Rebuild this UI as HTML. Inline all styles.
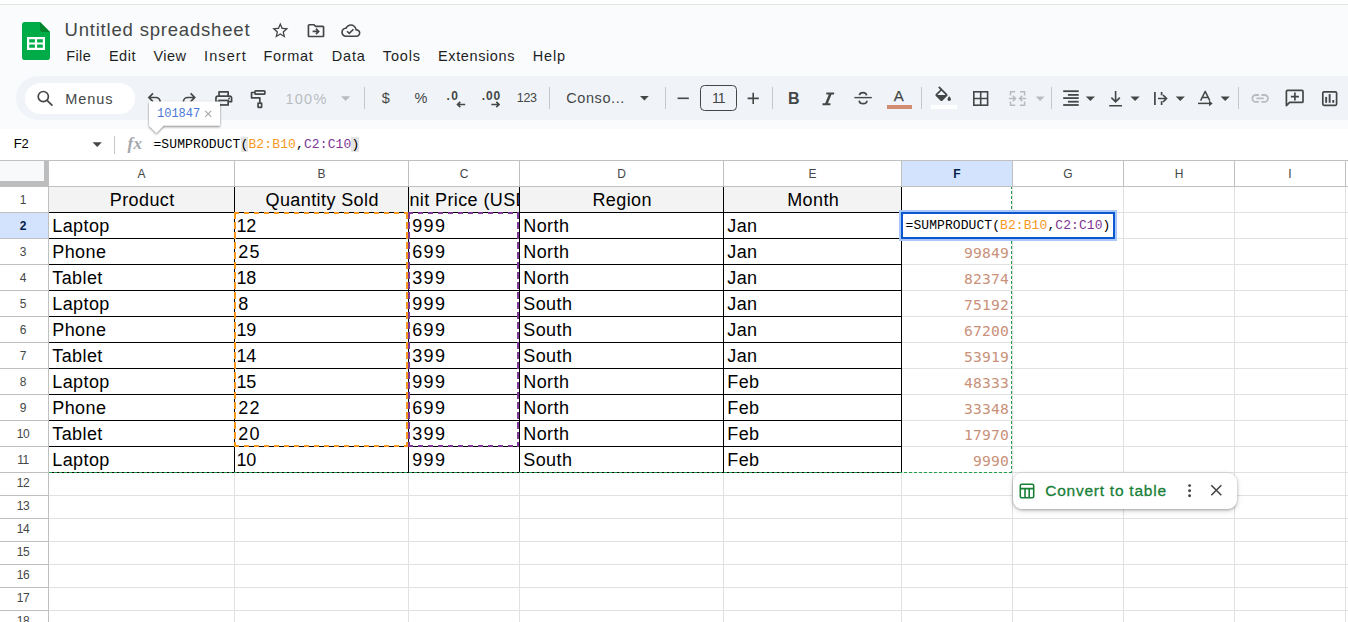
<!DOCTYPE html>
<html lang="en">
<head>
<meta charset="utf-8">
<title>Untitled spreadsheet</title>
<style>
*{box-sizing:border-box;margin:0;padding:0}
html,body{width:1348px;height:622px;overflow:hidden;background:#fff}
body{position:relative;font-family:"Liberation Sans",sans-serif;color:#1f1f1f}
.abs{position:absolute}
#topwhite{left:0;top:0;width:1348px;height:4px;background:#fff}
#topline{left:0;top:4px;width:1348px;height:1px;background:#e1e3e1}
#chrome{left:0;top:5px;width:1348px;height:124px;background:#f9fbfd}
#toolbar{left:16px;top:76px;width:1400px;height:44px;border-radius:22px;background:#f0f4f9}
#search{left:25px;top:83px;width:110px;height:31px;border-radius:16px;background:#fff}
.tt{position:absolute;line-height:20px;white-space:pre}
#fbar{left:0;top:129px;width:1348px;height:31px;background:#fff}
#fline{left:0;top:160px;width:1348px;height:1px;background:#c0c0c0}
#ftext{left:153.4px;top:136px;letter-spacing:.12px;font-family:"Liberation Mono",monospace;font-size:13px;line-height:17px;color:#000;white-space:pre}
.par{background:#e3e3e3}
.or{color:#f7981d}.pu{color:#7e3794}
/* grid */
#grid{position:absolute;left:0;top:161px;width:1348px;height:461px;background:#fff;overflow:hidden}
#gridin>*{position:absolute}
#gridin{position:absolute;left:0;top:-161px}
.ch{top:161px;height:25px;line-height:26px;text-align:center;font-size:12px;overflow:hidden;color:#444746;background:#fff}
.ch.sel{background:#d3e3fd;color:#041e49;font-weight:bold}
.rh{left:0;width:48px;text-align:center;font-size:12px;letter-spacing:-.4px;overflow:hidden;color:#444746;background:#fff;padding-right:2px}
.rh.sel{background:#d3e3fd;color:#041e49;font-weight:bold}
.vl{top:161px;width:1px;height:461px;background:#e1e1e1}
.hl{left:0;width:1348px;height:1px;background:#e1e1e1}
.chl{top:161px;width:1px;height:25px;background:#c0c0c0}
.rhl{left:0;width:48px;height:1px;background:#c0c0c0}
.hb1{left:48px;top:161px;width:1px;height:461px;background:#c0c0c0}
.hb2{left:0;top:186px;width:1348px;height:1px;background:#c0c0c0}
.hdrfill{left:49px;top:187px;width:852px;height:25px;background:#f3f3f3}
.cell{overflow:hidden;white-space:nowrap;font-size:18px;letter-spacing:.4px;color:#000;display:flex;align-items:flex-end;padding:0 4px 0 3.3px}
.cell span{display:block;line-height:20px;margin-bottom:2px}
.cell.hd{justify-content:center;padding:0 3px 0 4.4px}
.cell.num{justify-content:flex-end;padding-right:3px;letter-spacing:.2px;font-family:"DejaVu Sans Mono","Liberation Mono",monospace;font-size:14.67px;color:#c9917a}
.cell.dg{letter-spacing:1.3px}
.cell.dg i{font-style:normal;margin-left:-1.7px;letter-spacing:-.45px}
.cell.num span{margin-bottom:1.3px}
.cell.clipc span{position:relative;left:1px}
.bh{left:49px;width:853px;height:1px;background:#000}
.bv{top:187px;width:1px;height:286px;background:#000}

#editor{left:901px;top:212px;width:214px;height:27px;border:2px solid #0b57d0;background:#fff;box-shadow:0 0 0 2px #a8c7fa;font-family:"Liberation Mono",monospace;font-size:13px;letter-spacing:.08px;line-height:23px;color:#000;white-space:pre;padding-left:2.5px}
#chip{left:1013px;top:473px;width:224px;height:36px;border-radius:9px;background:#fff;box-shadow:0 1px 3px rgba(0,0,0,.3),0 2px 6px rgba(0,0,0,.12)}
#corner{left:0;top:161px;width:44px;height:20px;background:#f8f9fa}
#cornerv{left:44px;top:161px;width:4px;height:25px;background:#bdbdbd}
#cornerh{left:0;top:181px;width:48px;height:5px;background:#bdbdbd}
</style>
</head>
<body>
<div class="abs" id="topwhite"></div>
<div class="abs" id="topline"></div>
<div class="abs" id="chrome"></div>
<svg class="abs" style="left:22px;top:22px" width="28" height="38" viewBox="0 0 28 38">
<path d="M2.6 0H18l10 10v25.4c0 1.45-1.15 2.6-2.6 2.6H2.6C1.15 38 0 36.85 0 35.4V2.6C0 1.15 1.15 0 2.6 0z" fill="#00ac47"/>
<path d="M18 0l10 10H20.6C19.15 10 18 8.85 18 7.4z" fill="#00832d"/>
<path d="M5 15h18v13H5z" fill="#fff"/>
<path d="M7.2 17.2h5.7v3.2H7.2zM15.1 17.2h5.7v3.2h-5.7zM7.2 22.6h5.7v3.2H7.2zM15.1 22.6h5.7v3.2h-5.7z" fill="#00ac47"/>
</svg>
<svg class="abs" style="left:0;top:0" width="1348" height="70" viewBox="0 0 1348 70"><g transform="translate(270.61,20.86) scale(0.8076)" fill="#444746" ><path d="M22 9.24l-7.19-.62L12 2 9.19 8.63 2 9.24l5.46 4.73L5.82 21 12 17.27 18.18 21l-1.63-7.03L22 9.24zM12 15.4l-3.76 2.27 1-4.28-3.32-2.88 4.38-.38L12 6.1l1.71 4.04 4.38.38-3.32 2.88 1 4.28L12 15.4z"/></g><g transform="translate(305.92,20.52) scale(0.8400)" fill="#444746" ><path d="M20 6h-8l-2-2H4c-1.1 0-2 .9-2 2v12c0 1.1.9 2 2 2h16c1.1 0 2-.9 2-2V8c0-1.1-.9-2-2-2zm0 12H4V6h5.17l2 2H20v10zM12.6 17l-1.41-1.41L12.77 14H8v-2h4.77l-1.58-1.59L12.6 9l4 4-4 4z"/></g><g transform="translate(341.23,20.97) scale(0.8021)" fill="#444746" ><path d="M19.35 10.04C18.67 6.59 15.64 4 12 4 9.11 4 6.6 5.64 5.35 8.04 2.34 8.36 0 10.91 0 14c0 3.31 2.69 6 6 6h13c2.76 0 5-2.24 5-5 0-2.64-2.05-4.78-4.65-4.96zM19 18H6c-2.21 0-4-1.79-4-4 0-2.05 1.53-3.76 3.56-3.97l1.07-.11.5-.95C8.08 7.14 9.94 6 12 6c2.62 0 4.88 1.86 5.39 4.43l.3 1.5 1.53.11c1.56.1 2.78 1.41 2.78 2.96 0 1.65-1.35 3-3 3zm-9-3.82l-2.09-2.09L6.5 13.5 10 17l6.01-6.01-1.41-1.41L10 14.18z"/></g></svg>
<div class="abs" id="toolbar"></div>
<div class="abs" id="search"></div>
<svg class="abs" style="left:0;top:70px" width="1348" height="60" viewBox="0 70 1348 60">
<g fill="none" stroke="#444746" stroke-width="1.7"><circle cx="43.3" cy="96.6" r="5.1"/><path d="M47.1 100.4L52.4 105.6" stroke-linecap="butt"/></g>
<g fill="none" stroke="#444746" stroke-width="1.7" stroke-linejoin="miter"><path d="M153 93.4L148.9 97.5L153 101.6M149.3 97.5H156a4.2 4.2 0 0 1 4.2 4.2V106"/><path d="M190.6 93.4L194.7 97.5L190.6 101.6M194.3 97.5H187.6a4.2 4.2 0 0 0-4.2 4.2V106"/></g>
<g fill="none" stroke="#444746" stroke-width="1.7" stroke-linejoin="round"><path d="M219.05 96V91.85H228.15V96"/><path d="M219 101.55H215.95V98.2a2.1 2.1 0 0 1 2.1-2.1H229.5a2.1 2.1 0 0 1 2.1 2.1V101.55H228.2"/><rect x="219.05" y="100.45" width="9.1" height="4.5" stroke-linejoin="miter"/></g><circle cx="229.1" cy="98.5" r=".95" fill="#444746"/>
<g fill="none" stroke="#444746" stroke-width="1.7" stroke-linejoin="round"><rect x="254.95" y="90.85" width="9.9" height="3.25" rx="0.7"/><path d="M254.9 92.5H251.55V97.85H259.85V102.4"/><rect x="258.05" y="103.05" width="3.55" height="4.25" rx="0.4"/></g>
<path d="M341 96.2H350.2L345.6 100.9z" fill="#b9bcbf"/>
<path d="M640 96.0H648.8L644.4 100.5z" fill="#444746"/>
<path d="M1035.6 96.4H1044.6L1040.1 100.9z" fill="#b9bcbf"/>
<path d="M1085.8 96.4H1095L1090.4 100.9z" fill="#444746"/>
<path d="M1130.5 96.4H1139.7L1135.1 100.9z" fill="#444746"/>
<path d="M1175.7 96.4H1184.9L1180.3000000000002 100.9z" fill="#444746"/>
<path d="M1220.6 96.4H1229.8L1225.1999999999998 100.9z" fill="#444746"/>
<rect x="364" y="87" width="1" height="22" fill="#c7c7c7"/>
<rect x="549" y="87" width="1" height="22" fill="#c7c7c7"/>
<rect x="665" y="87" width="1" height="22" fill="#c7c7c7"/>
<rect x="772" y="87" width="1" height="22" fill="#c7c7c7"/>
<rect x="921" y="87" width="1" height="22" fill="#c7c7c7"/>
<rect x="1051" y="87" width="1" height="22" fill="#c7c7c7"/>
<rect x="1238" y="87" width="1" height="22" fill="#c7c7c7"/>
<g fill="none" stroke="#444746" stroke-width="1.6"><path d="M465.2 104.5H457.6M460.3 101.8L457.5 104.5L460.3 107.2"/><path d="M491.3 104.5H499M496.3 101.8L499.1 104.5L496.3 107.2"/></g>
<rect x="677.6" y="97.5" width="11.2" height="1.6" fill="#444746"/>
<path d="M747.6 97.6h11.2v1.6h-11.2zM752.4 92.8h1.6v11.2h-1.6z" fill="#444746"/>
<rect x="700.5" y="85.5" width="36" height="25" rx="4" fill="none" stroke="#444746" stroke-width="1"/>
<path d="M826.3 92.4h7.8v2h-2.6l-3.6 8.9h2.5v2h-7.9v-2h2.7l3.6-8.9h-2.5z" fill="#444746"/>
<g fill="none" stroke="#444746" stroke-width="1.7"><path d="M854.4 97.6H871.8" stroke-width="1.4"/><path d="M866.6 95.4c-.2-1.7-1.6-2.8-3.6-2.8-2 0-3.4 1-3.6 2.6"/><path d="M859.2 100.6c.2 1.9 1.7 3.1 4 3.1 2.2 0 3.7-1.1 3.8-2.9"/></g>
<rect x="887" y="105" width="25" height="4" fill="#d28c72"/>
<rect x="931" y="105" width="26" height="4" fill="#ffffff"/>
<g transform="translate(932.84,86.36) scale(0.8634)" fill="#444746" ><path d="M16.56 8.94L7.62 0 6.21 1.41l2.38 2.38-5.15 5.15c-.59.59-.59 1.54 0 2.12l5.5 5.5c.29.29.68.44 1.06.44s.77-.15 1.06-.44l5.5-5.5c.59-.58.59-1.53 0-2.12zM5.21 10L10 5.21 14.79 10H5.21zM19 11.5s-2 2.17-2 3.5c0 1.1.9 2 2 2s2-.9 2-2c0-1.33-2-3.5-2-3.5z"/></g>
<g fill="none" stroke="#444746" stroke-width="1.6"><rect x="973.8" y="91.8" width="13.8" height="13.4"/><path d="M980.7 91.8V105.2M973.8 98.5H987.6"/></g>
<g fill="none" stroke="#b9bcbf" stroke-width="1.5"><path d="M1015.2 91.7H1010.5V95.4M1020 91.7H1024.6V95.4M1015.2 105.3H1010.5V101.6M1020 105.3H1024.6V101.6"/><path d="M1008.9 98.5H1015.4M1012.9 95.9L1015.6 98.5L1012.9 101.1M1026.2 98.5H1019.7M1022.2 95.9L1019.5 98.5L1022.2 101.1"/></g>
<g fill="#444746"><rect x="1063.2" y="90.3" width="15.5" height="1.8"/><rect x="1067.9" y="94" width="10.8" height="1.8"/><rect x="1063.2" y="97.2" width="15.5" height="1.8"/><rect x="1067.9" y="100.8" width="10.8" height="1.8"/><rect x="1063.2" y="104.1" width="15.5" height="1.8"/></g>
<g fill="none" stroke="#444746" stroke-width="1.6"><path d="M1109.2 105.8H1122M1115.6 91V101.6M1111.4 97.6L1115.6 101.8L1119.8 97.6"/></g>
<g fill="none" stroke="#444746" stroke-width="1.7"><path d="M1154.9 92.1V105M1161.6 92.1V95.3M1161.6 101.3V105M1158 98.5H1166.2M1163 95L1166.5 98.5L1163 102"/></g>
<g fill="none" stroke="#444746" stroke-width="1.5" stroke-linejoin="round"><path d="M1200.6 100.7L1205.2 91.4L1209.8 100.7M1202.2 97.6H1208.2"/><path d="M1198 103.4H1210.5"/></g><path d="M1209 100.6L1212.7 103.4L1209 106.2z" fill="#444746"/>
<g fill="none" stroke="#b9bcbf" stroke-width="1.8"><path d="M1258.9 95H1255.8a3.45 3.45 0 0 0 0 6.9h3.1M1261.4 95h3.1a3.45 3.45 0 0 1 0 6.9h-3.1M1256.5 98.45H1263.8"/></g>
<g fill="none" stroke="#444746" stroke-width="1.7" stroke-linejoin="round"><path d="M1286.4 105.6V91.4a1 1 0 0 1 1-1H1302a1 1 0 0 1 1 1V101.4a1 1 0 0 1-1 1H1289.6z"/><path d="M1294.9 92.6V100.6M1290.9 96.6H1298.9" stroke-width="1.7"/></g>
<g fill="none" stroke="#444746" stroke-width="1.7"><rect x="1322.8" y="91.9" width="13.8" height="13.4" rx="1.2"/></g><g fill="#444746"><rect x="1325.2" y="96.9" width="1.9" height="5.9"/><rect x="1328.7" y="94.1" width="1.9" height="8.7"/><rect x="1332.3" y="100" width="1.9" height="2.8"/></g>
</svg>
<div class="abs" id="fbar"></div>
<div class="abs" id="fline"></div>
<div class="tt" style="left:64.49px;top:17.5px;font-size:18.5px;color:#444746;letter-spacing:0.809px;line-height:24px;">Untitled spreadsheet</div>
<div class="tt" style="left:66.24px;top:45.7px;font-size:14.5px;color:#1f1f1f;letter-spacing:0.375px;">File</div>
<div class="tt" style="left:108.94px;top:45.7px;font-size:14.5px;color:#1f1f1f;letter-spacing:0.505px;">Edit</div>
<div class="tt" style="left:153.43px;top:45.7px;font-size:14.5px;color:#1f1f1f;letter-spacing:0.455px;">View</div>
<div class="tt" style="left:204.1px;top:45.7px;font-size:14.5px;color:#1f1f1f;letter-spacing:1.063px;">Insert</div>
<div class="tt" style="left:263.55px;top:45.7px;font-size:14.5px;color:#1f1f1f;letter-spacing:0.68px;">Format</div>
<div class="tt" style="left:331.75px;top:45.7px;font-size:14.5px;color:#1f1f1f;letter-spacing:0.833px;">Data</div>
<div class="tt" style="left:382.78px;top:45.7px;font-size:14.5px;color:#1f1f1f;letter-spacing:0.864px;">Tools</div>
<div class="tt" style="left:438.05px;top:45.7px;font-size:14.5px;color:#1f1f1f;letter-spacing:0.602px;">Extensions</div>
<div class="tt" style="left:532.74px;top:45.7px;font-size:14.5px;color:#1f1f1f;letter-spacing:0.828px;">Help</div>
<div class="tt" style="left:65.35px;top:88.6px;font-size:14.5px;color:#444746;letter-spacing:0.878px;">Menus</div>
<div class="tt" style="left:285.55px;top:88.8px;font-size:14.5px;color:#b9bcbf;letter-spacing:1.213px;">100%</div>
<div class="tt" style="left:381.87px;top:88.3px;font-size:14.5px;color:#444746;">$</div>
<div class="tt" style="left:414.38px;top:88.3px;font-size:14.5px;color:#444746;">%</div>
<div class="tt" style="left:446.46px;top:85.8px;font-size:12px;color:#444746;font-weight:bold;letter-spacing:1.358px;">.0</div>
<div class="tt" style="left:481.66px;top:85.8px;font-size:12px;color:#444746;font-weight:bold;letter-spacing:0.972px;">.00</div>
<div class="tt" style="left:516.82px;top:88.3px;font-size:12.5px;color:#444746;letter-spacing:-0.316px;">123</div>
<div class="tt" style="left:566.23px;top:87.6px;font-size:14.5px;color:#444746;letter-spacing:0.583px;">Conso...</div>
<div class="tt" style="left:711.97px;top:88.2px;font-size:14px;color:#444746;letter-spacing:-0.959px;">11</div>
<div class="tt" style="left:787.91px;top:88.6px;font-size:16px;color:#444746;font-weight:bold;">B</div>
<div class="tt" style="left:893.67px;top:85.5px;font-size:15px;color:#444746;-webkit-text-stroke:.25px #444746;">A</div>
<div class="tt" style="left:13.81px;top:134.3px;font-size:13px;color:#000;letter-spacing:-0.302px;">F2</div>
<div class="tt" style="left:1045.18px;top:480.6px;font-size:15.5px;color:#188038;letter-spacing:0.761px;-webkit-text-stroke:.3px #188038;z-index:5;">Convert to table</div>
<div class="abs" id="ftext">=SUMPRODUCT<span class="par">(</span><span class="or">B2:B10</span>,<span class="pu">C2:C10</span><span class="par">)</span></div>
<svg class="abs" style="left:0;top:95px" width="400" height="70" viewBox="0 95 400 70">
<path d="M92.6 142.3H101.8L97.19999999999999 146.9z" fill="#444746"/>
<rect x="114" y="136" width="1" height="18" fill="#c7c7c7"/>
<defs><filter id="sh" x="-20%" y="-20%" width="140%" height="160%"><feDropShadow dx="0" dy="1.2" stdDeviation="1.3" flood-color="#000" flood-opacity=".5"/></filter></defs>
<path d="M149.5 101.5H219.5a.5.5 0 0 1 .5.5V125.5H163.6L156.3 133L149 125.5V102a.5.5 0 0 1 .5-.5z" fill="#fff" filter="url(#sh)"/>
<path d="M205.2 110.8L211.2 116.8M211.2 110.8L205.2 116.8" stroke="#a6a6a6" stroke-width="1.1" fill="none"/>
</svg>
<div class="abs" style="left:157px;top:106px;font-family:'Liberation Mono',monospace;font-size:12px;line-height:16px;color:#4a78d6;white-space:pre">101847</div>
<div class="abs" style="left:127.5px;top:133px;font-family:'Liberation Serif',serif;font-style:italic;font-weight:bold;font-size:17px;line-height:22px;color:#a3a8ad;letter-spacing:.3px">fx</div>
<div id="grid"><div id="gridin">
<div class="ch" style="left:49px;width:185px">A</div>
<div class="ch" style="left:235px;width:173px">B</div>
<div class="ch" style="left:409px;width:110px">C</div>
<div class="ch" style="left:520px;width:203px">D</div>
<div class="ch" style="left:724px;width:177px">E</div>
<div class="ch sel" style="left:902px;width:110px">F</div>
<div class="ch" style="left:1013px;width:110px">G</div>
<div class="ch" style="left:1124px;width:110px">H</div>
<div class="ch" style="left:1235px;width:110px">I</div>
<div class="rh" style="top:187px;height:25px;line-height:26px">1</div>
<div class="rh sel" style="top:213px;height:25px;line-height:26px">2</div>
<div class="rh" style="top:239px;height:25px;line-height:26px">3</div>
<div class="rh" style="top:265px;height:25px;line-height:26px">4</div>
<div class="rh" style="top:291px;height:25px;line-height:26px">5</div>
<div class="rh" style="top:317px;height:25px;line-height:26px">6</div>
<div class="rh" style="top:343px;height:25px;line-height:26px">7</div>
<div class="rh" style="top:369px;height:25px;line-height:26px">8</div>
<div class="rh" style="top:395px;height:25px;line-height:26px">9</div>
<div class="rh" style="top:421px;height:25px;line-height:26px">10</div>
<div class="rh" style="top:447px;height:25px;line-height:26px">11</div>
<div class="rh" style="top:473px;height:22px;line-height:20px">12</div>
<div class="rh" style="top:496px;height:22px;line-height:20px">13</div>
<div class="rh" style="top:519px;height:22px;line-height:20px">14</div>
<div class="rh" style="top:542px;height:22px;line-height:20px">15</div>
<div class="rh" style="top:565px;height:22px;line-height:20px">16</div>
<div class="rh" style="top:588px;height:22px;line-height:20px">17</div>
<div class="rh" style="top:611px;height:22px;line-height:20px">18</div>
<div class="rh" style="top:634px;height:22px;line-height:20px">19</div>
<div class="vl" style="left:234px"></div>
<div class="vl" style="left:408px"></div>
<div class="vl" style="left:519px"></div>
<div class="vl" style="left:723px"></div>
<div class="vl" style="left:901px"></div>
<div class="vl" style="left:1012px"></div>
<div class="vl" style="left:1123px"></div>
<div class="vl" style="left:1234px"></div>
<div class="vl" style="left:1345px"></div>
<div class="hl" style="top:212px"></div>
<div class="hl" style="top:238px"></div>
<div class="hl" style="top:264px"></div>
<div class="hl" style="top:290px"></div>
<div class="hl" style="top:316px"></div>
<div class="hl" style="top:342px"></div>
<div class="hl" style="top:368px"></div>
<div class="hl" style="top:394px"></div>
<div class="hl" style="top:420px"></div>
<div class="hl" style="top:446px"></div>
<div class="hl" style="top:472px"></div>
<div class="hl" style="top:495px"></div>
<div class="hl" style="top:518px"></div>
<div class="hl" style="top:541px"></div>
<div class="hl" style="top:564px"></div>
<div class="hl" style="top:587px"></div>
<div class="hl" style="top:610px"></div>
<div class="hl" style="top:633px"></div>
<div class="hl" style="top:656px"></div>
<div class="chl" style="left:234px"></div>
<div class="chl" style="left:408px"></div>
<div class="chl" style="left:519px"></div>
<div class="chl" style="left:723px"></div>
<div class="chl" style="left:901px"></div>
<div class="chl" style="left:1012px"></div>
<div class="chl" style="left:1123px"></div>
<div class="chl" style="left:1234px"></div>
<div class="chl" style="left:1345px"></div>
<div class="rhl" style="top:212px"></div>
<div class="rhl" style="top:238px"></div>
<div class="rhl" style="top:264px"></div>
<div class="rhl" style="top:290px"></div>
<div class="rhl" style="top:316px"></div>
<div class="rhl" style="top:342px"></div>
<div class="rhl" style="top:368px"></div>
<div class="rhl" style="top:394px"></div>
<div class="rhl" style="top:420px"></div>
<div class="rhl" style="top:446px"></div>
<div class="rhl" style="top:472px"></div>
<div class="rhl" style="top:495px"></div>
<div class="rhl" style="top:518px"></div>
<div class="rhl" style="top:541px"></div>
<div class="rhl" style="top:564px"></div>
<div class="rhl" style="top:587px"></div>
<div class="rhl" style="top:610px"></div>
<div class="rhl" style="top:633px"></div>
<div class="rhl" style="top:656px"></div>
<div class="hb1"></div><div class="hb2"></div>
<div class="hdrfill"></div>
<div class="cell hd" style="left:49px;top:187px;width:185px;height:25px"><span>Product</span></div>
<div class="cell hd" style="left:235px;top:187px;width:173px;height:25px"><span>Quantity Sold</span></div>
<div class="cell hd clipc" style="left:409px;top:187px;width:110px;height:25px"><span>Unit Price (USD)</span></div>
<div class="cell hd" style="left:520px;top:187px;width:203px;height:25px"><span>Region</span></div>
<div class="cell hd" style="left:724px;top:187px;width:177px;height:25px"><span>Month</span></div>
<div class="cell" style="left:49px;top:213px;width:185px;height:25px"><span>Laptop</span></div>
<div class="cell dg" style="left:235px;top:213px;width:173px;height:25px"><span><i>1</i>2</span></div>
<div class="cell dg" style="left:409px;top:213px;width:110px;height:25px"><span>999</span></div>
<div class="cell" style="left:520px;top:213px;width:203px;height:25px"><span>North</span></div>
<div class="cell" style="left:724px;top:213px;width:177px;height:25px"><span>Jan</span></div>
<div class="cell" style="left:49px;top:239px;width:185px;height:25px"><span>Phone</span></div>
<div class="cell dg" style="left:235px;top:239px;width:173px;height:25px"><span>25</span></div>
<div class="cell dg" style="left:409px;top:239px;width:110px;height:25px"><span>699</span></div>
<div class="cell" style="left:520px;top:239px;width:203px;height:25px"><span>North</span></div>
<div class="cell" style="left:724px;top:239px;width:177px;height:25px"><span>Jan</span></div>
<div class="cell num" style="left:902px;top:239px;width:110px;height:25px"><span>99849</span></div>
<div class="cell" style="left:49px;top:265px;width:185px;height:25px"><span>Tablet</span></div>
<div class="cell dg" style="left:235px;top:265px;width:173px;height:25px"><span><i>1</i>8</span></div>
<div class="cell dg" style="left:409px;top:265px;width:110px;height:25px"><span>399</span></div>
<div class="cell" style="left:520px;top:265px;width:203px;height:25px"><span>North</span></div>
<div class="cell" style="left:724px;top:265px;width:177px;height:25px"><span>Jan</span></div>
<div class="cell num" style="left:902px;top:265px;width:110px;height:25px"><span>82374</span></div>
<div class="cell" style="left:49px;top:291px;width:185px;height:25px"><span>Laptop</span></div>
<div class="cell dg" style="left:235px;top:291px;width:173px;height:25px"><span>8</span></div>
<div class="cell dg" style="left:409px;top:291px;width:110px;height:25px"><span>999</span></div>
<div class="cell" style="left:520px;top:291px;width:203px;height:25px"><span>South</span></div>
<div class="cell" style="left:724px;top:291px;width:177px;height:25px"><span>Jan</span></div>
<div class="cell num" style="left:902px;top:291px;width:110px;height:25px"><span>75192</span></div>
<div class="cell" style="left:49px;top:317px;width:185px;height:25px"><span>Phone</span></div>
<div class="cell dg" style="left:235px;top:317px;width:173px;height:25px"><span><i>1</i>9</span></div>
<div class="cell dg" style="left:409px;top:317px;width:110px;height:25px"><span>699</span></div>
<div class="cell" style="left:520px;top:317px;width:203px;height:25px"><span>South</span></div>
<div class="cell" style="left:724px;top:317px;width:177px;height:25px"><span>Jan</span></div>
<div class="cell num" style="left:902px;top:317px;width:110px;height:25px"><span>67200</span></div>
<div class="cell" style="left:49px;top:343px;width:185px;height:25px"><span>Tablet</span></div>
<div class="cell dg" style="left:235px;top:343px;width:173px;height:25px"><span><i>1</i>4</span></div>
<div class="cell dg" style="left:409px;top:343px;width:110px;height:25px"><span>399</span></div>
<div class="cell" style="left:520px;top:343px;width:203px;height:25px"><span>South</span></div>
<div class="cell" style="left:724px;top:343px;width:177px;height:25px"><span>Jan</span></div>
<div class="cell num" style="left:902px;top:343px;width:110px;height:25px"><span>53919</span></div>
<div class="cell" style="left:49px;top:369px;width:185px;height:25px"><span>Laptop</span></div>
<div class="cell dg" style="left:235px;top:369px;width:173px;height:25px"><span><i>1</i>5</span></div>
<div class="cell dg" style="left:409px;top:369px;width:110px;height:25px"><span>999</span></div>
<div class="cell" style="left:520px;top:369px;width:203px;height:25px"><span>North</span></div>
<div class="cell" style="left:724px;top:369px;width:177px;height:25px"><span>Feb</span></div>
<div class="cell num" style="left:902px;top:369px;width:110px;height:25px"><span>48333</span></div>
<div class="cell" style="left:49px;top:395px;width:185px;height:25px"><span>Phone</span></div>
<div class="cell dg" style="left:235px;top:395px;width:173px;height:25px"><span>22</span></div>
<div class="cell dg" style="left:409px;top:395px;width:110px;height:25px"><span>699</span></div>
<div class="cell" style="left:520px;top:395px;width:203px;height:25px"><span>North</span></div>
<div class="cell" style="left:724px;top:395px;width:177px;height:25px"><span>Feb</span></div>
<div class="cell num" style="left:902px;top:395px;width:110px;height:25px"><span>33348</span></div>
<div class="cell" style="left:49px;top:421px;width:185px;height:25px"><span>Tablet</span></div>
<div class="cell dg" style="left:235px;top:421px;width:173px;height:25px"><span>20</span></div>
<div class="cell dg" style="left:409px;top:421px;width:110px;height:25px"><span>399</span></div>
<div class="cell" style="left:520px;top:421px;width:203px;height:25px"><span>North</span></div>
<div class="cell" style="left:724px;top:421px;width:177px;height:25px"><span>Feb</span></div>
<div class="cell num" style="left:902px;top:421px;width:110px;height:25px"><span>17970</span></div>
<div class="cell" style="left:49px;top:447px;width:185px;height:25px"><span>Laptop</span></div>
<div class="cell dg" style="left:235px;top:447px;width:173px;height:25px"><span><i>1</i>0</span></div>
<div class="cell dg" style="left:409px;top:447px;width:110px;height:25px"><span>999</span></div>
<div class="cell" style="left:520px;top:447px;width:203px;height:25px"><span>South</span></div>
<div class="cell" style="left:724px;top:447px;width:177px;height:25px"><span>Feb</span></div>
<div class="cell num" style="left:902px;top:447px;width:110px;height:25px"><span>9990</span></div>
<div class="bh" style="top:212px"></div>
<div class="bh" style="top:238px"></div>
<div class="bh" style="top:264px"></div>
<div class="bh" style="top:290px"></div>
<div class="bh" style="top:316px"></div>
<div class="bh" style="top:342px"></div>
<div class="bh" style="top:368px"></div>
<div class="bh" style="top:394px"></div>
<div class="bh" style="top:420px"></div>
<div class="bh" style="top:446px"></div>
<div class="bh" style="top:472px"></div>
<div class="bv" style="left:234px"></div>
<div class="bv" style="left:408px"></div>
<div class="bv" style="left:519px"></div>
<div class="bv" style="left:723px"></div>
<div class="bv" style="left:901px"></div>
</div></div>
<div class="abs" id="corner"></div><div class="abs" id="cornerv"></div><div class="abs" id="cornerh"></div>
<svg class="abs" style="left:0;top:161px" width="1348" height="461" viewBox="0 161 1348 461" shape-rendering="crispEdges">
<path d="M49 472.5H1012" stroke="#1fa04b" stroke-width="1" stroke-dasharray="3 2" fill="none"/>
<path d="M1011.5 187V473" stroke="#1fa04b" stroke-width="1" stroke-dasharray="3 2" stroke-dashoffset="1" fill="none"/>
<g fill="none" stroke="#f7981d" stroke-width="2">
<path d="M234 213H408" stroke-dasharray="5 5"/>
<path d="M234 446H408" stroke-dasharray="5 5"/>
<path d="M235 212V447" stroke-dasharray="7 3"/>
<path d="M407 212V447" stroke-dasharray="7 3"/>
</g>
<g fill="none" stroke="#7e3794" stroke-width="2">
<path d="M408 213H519" stroke-dasharray="5 5"/>
<path d="M408 446H519" stroke-dasharray="5 5"/>
<path d="M409 212V447" stroke-dasharray="7 3"/>
<path d="M518 212V447" stroke-dasharray="7 3"/>
</g>
</svg>
<div class="abs" id="editor"><span>=SUMPRODUCT(<span class="or">B2:B10</span>,<span class="pu">C2:C10</span>)</span></div>
<div class="abs" id="chip"></div>
<svg class="abs" style="left:1013px;top:473px" width="224" height="36" viewBox="1013 473 224 36">
<g fill="none" stroke="#188038" stroke-width="1.6"><rect x="1020.3" y="484.3" width="13.4" height="13.4" rx="1.4"/><path d="M1020.3 488.6H1033.7M1025 488.6V497.7M1029.2 488.6V497.7"/></g>
<g fill="#444746"><circle cx="1189.6" cy="485.6" r="1.45"/><circle cx="1189.6" cy="490.7" r="1.45"/><circle cx="1189.6" cy="495.8" r="1.45"/></g>
<path d="M1211.3 485.3L1221.3 495.3M1221.3 485.3L1211.3 495.3" stroke="#444746" stroke-width="1.6" fill="none"/>
</svg>
</body>
</html>
